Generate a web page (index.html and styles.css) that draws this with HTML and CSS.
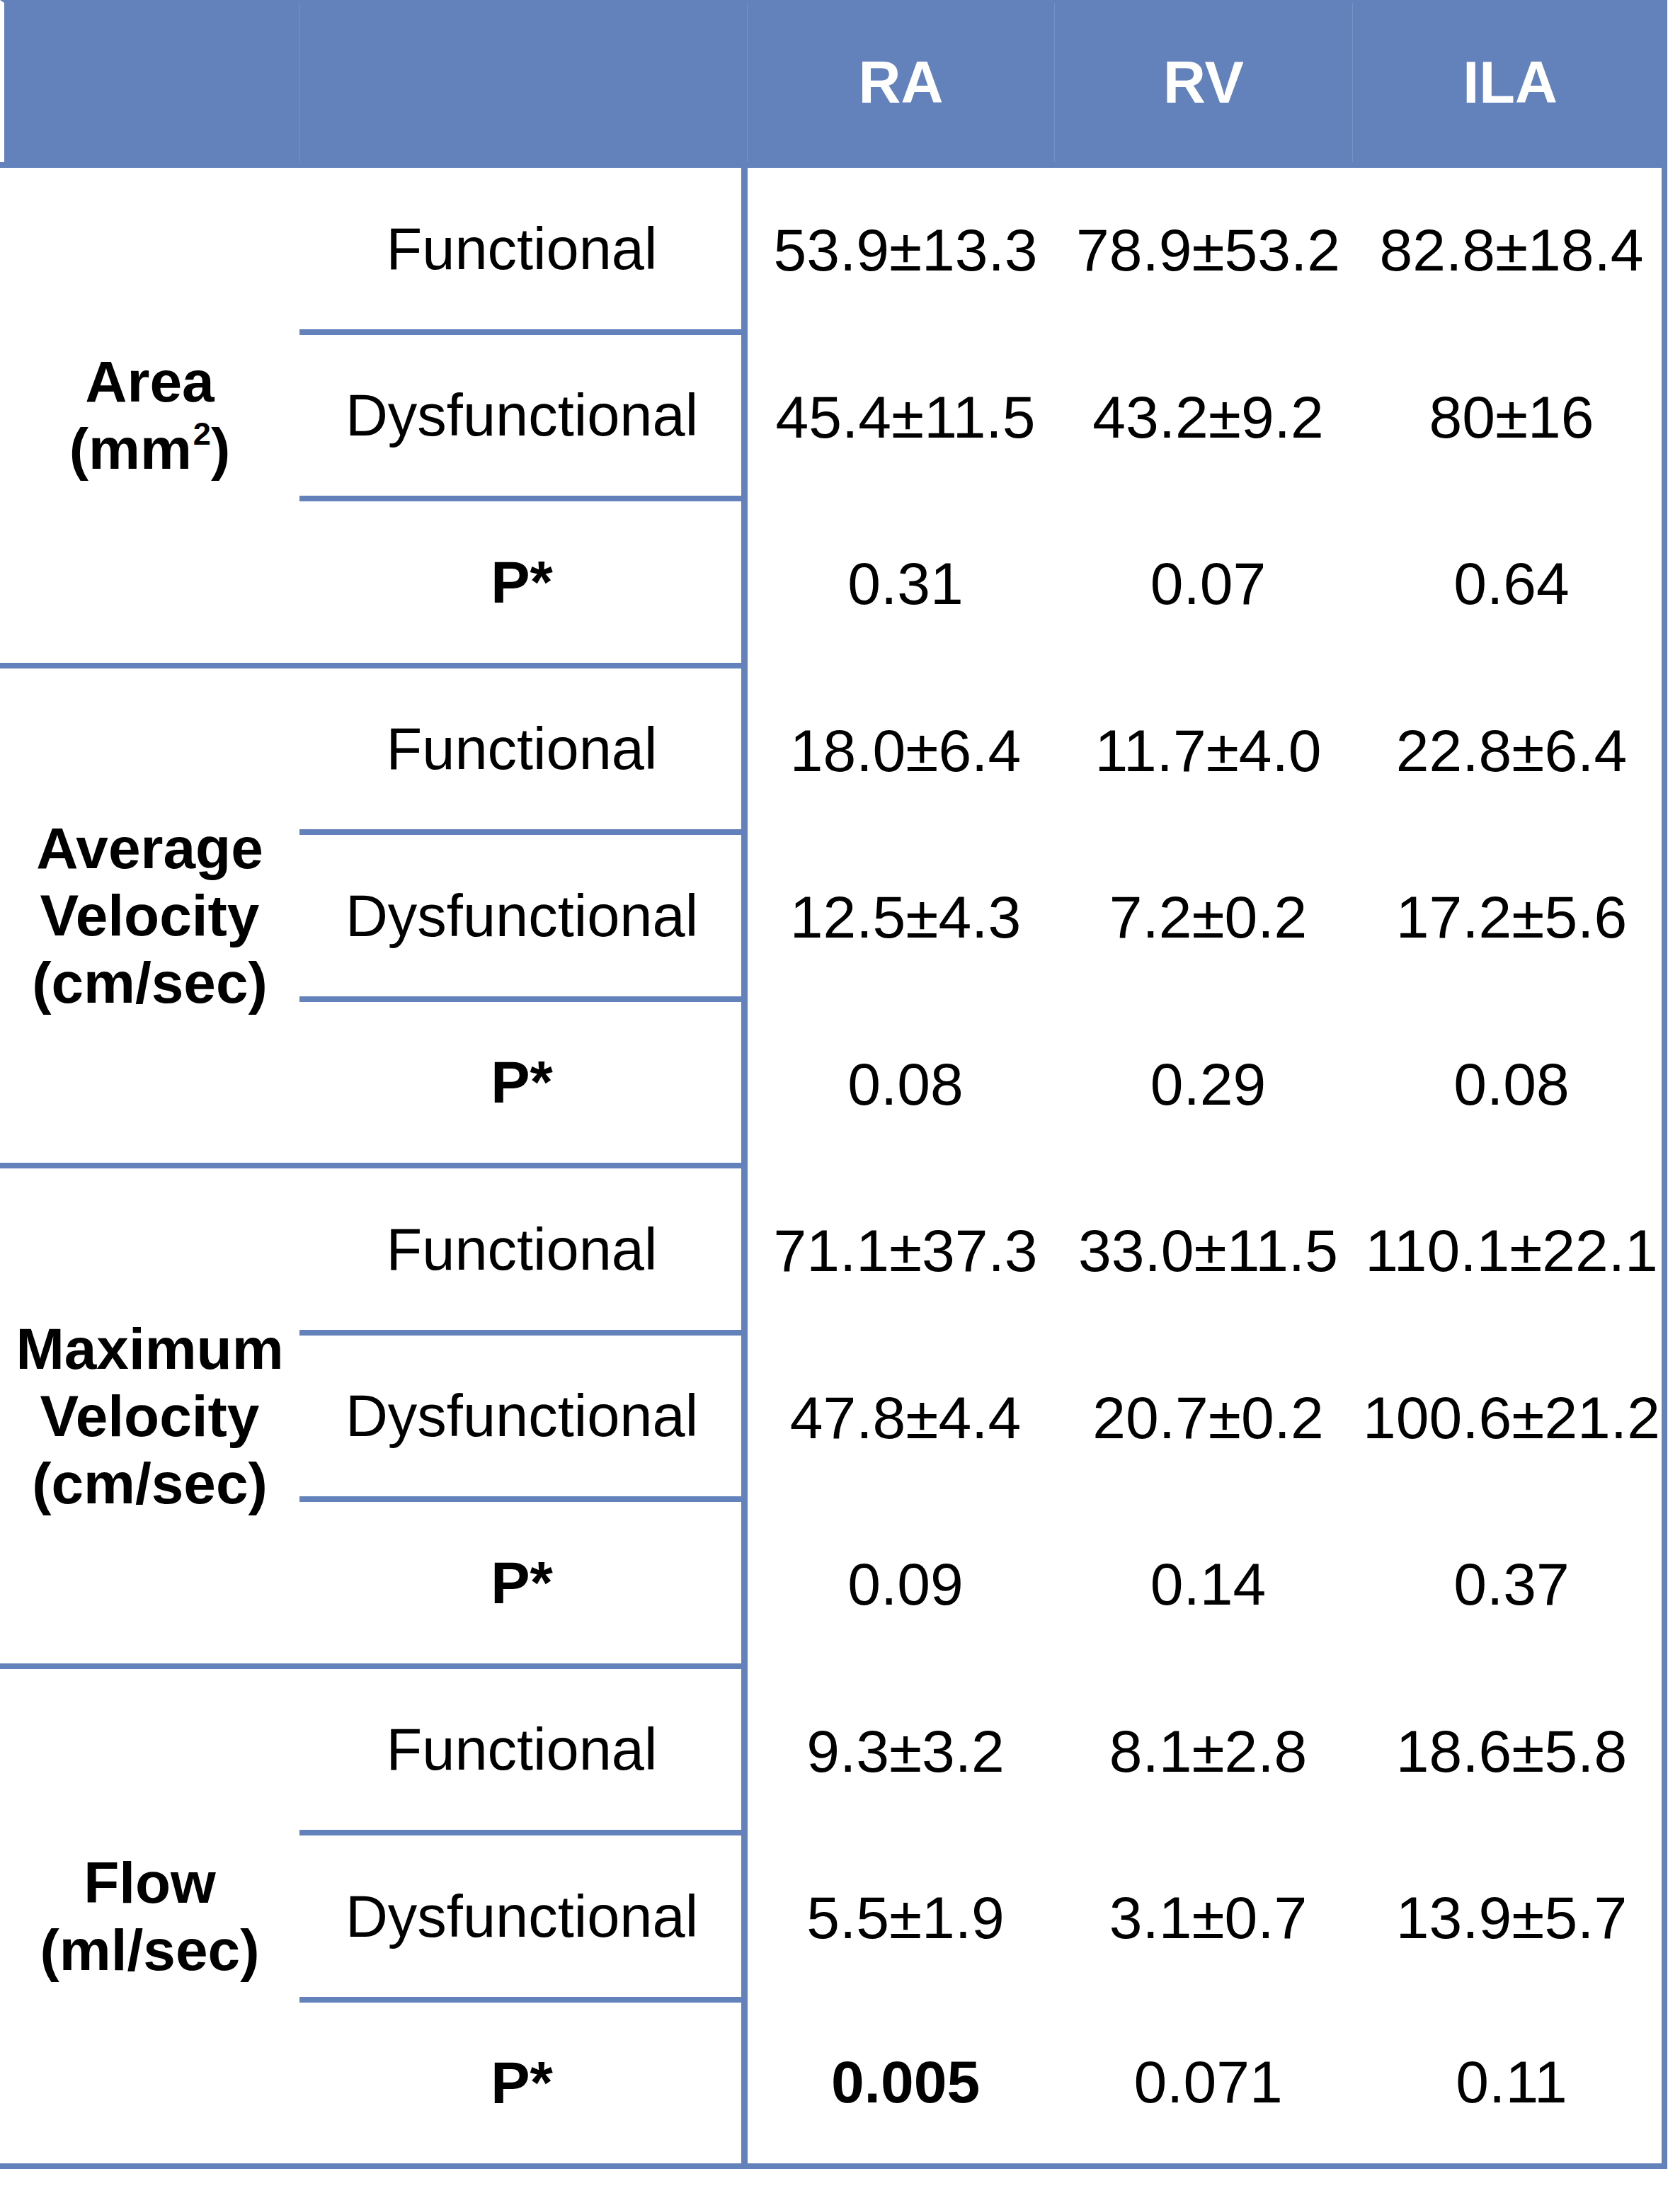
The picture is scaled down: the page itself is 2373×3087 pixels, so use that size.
FILE: index.html
```html
<!DOCTYPE html>
<html>
<head>
<meta charset="utf-8">
<link rel="stylesheet" href="styles.css">
</head>
<body>
<div class="table">
  <div class="head">
    <div class="hcell"></div>
    <div class="hcell"></div>
    <div class="hcell">RA</div>
    <div class="hcell">RV</div>
    <div class="hcell last">ILA</div>
  </div>
  <div class="body">
    <div class="group"><span>Area<br>(mm<sup>2</sup>)</span></div>
    <div class="sub">Functional</div>
    <div class="val">53.9±13.3</div><div class="val">78.9±53.2</div><div class="val end">82.8±18.4</div>
    <div class="sub">Dysfunctional</div>
    <div class="val">45.4±11.5</div><div class="val">43.2±9.2</div><div class="val end">80±16</div>
    <div class="sub p">P*</div>
    <div class="val">0.31</div><div class="val">0.07</div><div class="val end">0.64</div>

    <div class="group"><span>Average<br>Velocity<br>(cm/sec)</span></div>
    <div class="sub">Functional</div>
    <div class="val">18.0±6.4</div><div class="val">11.7±4.0</div><div class="val end">22.8±6.4</div>
    <div class="sub">Dysfunctional</div>
    <div class="val">12.5±4.3</div><div class="val">7.2±0.2</div><div class="val end">17.2±5.6</div>
    <div class="sub p">P*</div>
    <div class="val">0.08</div><div class="val">0.29</div><div class="val end">0.08</div>

    <div class="group"><span>Maximum<br>Velocity<br>(cm/sec)</span></div>
    <div class="sub">Functional</div>
    <div class="val">71.1±37.3</div><div class="val">33.0±11.5</div><div class="val end">110.1±22.1</div>
    <div class="sub">Dysfunctional</div>
    <div class="val">47.8±4.4</div><div class="val">20.7±0.2</div><div class="val end">100.6±21.2</div>
    <div class="sub p">P*</div>
    <div class="val">0.09</div><div class="val">0.14</div><div class="val end">0.37</div>

    <div class="group"><span>Flow<br>(ml/sec)</span></div>
    <div class="sub">Functional</div>
    <div class="val">9.3±3.2</div><div class="val">8.1±2.8</div><div class="val end">18.6±5.8</div>
    <div class="sub">Dysfunctional</div>
    <div class="val">5.5±1.9</div><div class="val">3.1±0.7</div><div class="val end">13.9±5.7</div>
    <div class="sub p">P*</div>
    <div class="val bottom strong">0.005</div><div class="val bottom">0.071</div><div class="val end bottom">0.11</div>
  </div>
</div>
</body>
</html>
```
FILE: styles.css
```css
html, body {
  margin: 0;
  padding: 0;
  background: #ffffff;
}
body {
  font-family: "Liberation Sans", Arial, sans-serif;
  color: #000;
}
.table {
  width: 2355px;
}
.head {
  display: grid;
  grid-template-columns: 417px 633px 434px 421px 444px;
  background: #6382bb;
  border-left: 6px solid #ffffff;
  height: 225px;
  border-top: 4px solid #6382bb;
  border-bottom: 8px solid #6382bb;
  position: relative;
}
.head::before {
  content: "";
  position: absolute;
  left: -6px;
  bottom: -8px;
  width: 6px;
  height: 8px;
  background: #6382bb;
}
.hcell {
  display: flex;
  align-items: center;
  justify-content: center;
  color: #ffffff;
  font-weight: bold;
  font-size: 83px;
  border-right: 1px solid rgba(255,255,255,0.12);
}
.hcell.last {
  border-right: none;
}
.body {
  display: grid;
  grid-template-columns: 423px 633px 434px 421px 444px;
  grid-auto-rows: 235.5px;
}
.group {
  grid-row: span 3;
  grid-column: 1;
  display: flex;
  align-items: center;
  justify-content: center;
  text-align: center;
  font-weight: bold;
  font-size: 82px;
  line-height: 95px;
  border-bottom: 8px solid #6382bb;
  white-space: nowrap;
}
.group sup {
  font-size: 55%;
  line-height: 0;
  vertical-align: 0.75em;
  padding-left: 2px;
}
.sub {
  grid-column: 2;
  display: flex;
  align-items: center;
  justify-content: center;
  font-size: 83px;
  border-bottom: 8px solid #6382bb;
  border-right: 9px solid #6382bb;
  padding-left: 4px;
  padding-top: 2px;
}
.sub.p {
  font-weight: bold;
}
.val {
  display: flex;
  align-items: center;
  justify-content: center;
  font-size: 84px;
  white-space: nowrap;
  padding-left: 12px;
  padding-bottom: 2px;
}
.val.end {
  border-right: 8px solid #6382bb;
}
.val.bottom {
  border-bottom: 8px solid #6382bb;
}
.val.strong {
  font-weight: bold;
}
```
